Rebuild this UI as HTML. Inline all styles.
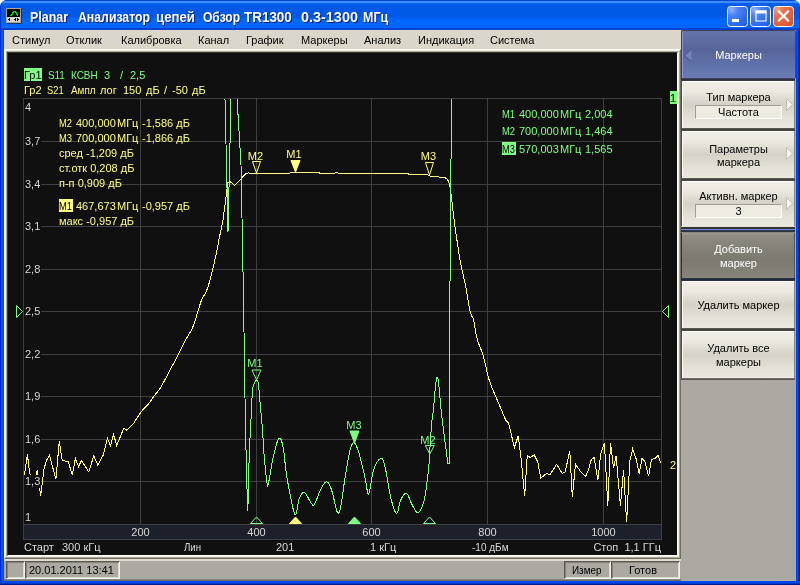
<!DOCTYPE html>
<html><head><meta charset="utf-8">
<style>
*{margin:0;padding:0;box-sizing:border-box}
html,body{width:800px;height:585px;overflow:hidden;background:#fff;font-family:"Liberation Sans",sans-serif}
.a{position:absolute}
#win{will-change:transform;position:absolute;left:0;top:0;width:800px;height:585px;background:#0050e8;border-radius:7px 7px 0 0;overflow:hidden}
#title{left:0;top:0;width:800px;height:30px;background:linear-gradient(to bottom,#0a46c8 0px,#0a46c8 1px,#3d8dff 1px,#3d8dff 3px,#0d62f0 3px,#0058e6 6px,#0058e6 16px,#005eef 18px,#0066ff 20px,#0066ff 28px,#0043cf 28px,#0043cf 30px)}
.ttlw{top:9px;font:bold 14px "Liberation Sans",sans-serif;line-height:16px;color:#fff;text-shadow:1px 1px 0 #0a1e7a;white-space:pre;transform-origin:0 0}
.tb{top:6px;width:21px;height:21px;border:1px solid #fff;border-radius:3px}
#lb{left:0;top:30px;width:4px;height:555px;background:linear-gradient(to right,#0028d8 1px,#0058f0 1px,#0058f0 3px,#0048e8 3px)}
#lb2{left:0;top:6px;width:1px;height:24px;background:#0036d0}#rb2{left:799px;top:6px;width:1px;height:24px;background:#0028a8}
#rb{left:796px;top:30px;width:4px;height:555px;background:linear-gradient(to right,#0044f0 1px,#0050f8 1px,#0050f8 2px,#0030b8 2px,#0030b8 3px,#001c90 3px)}
#bb{left:0;top:581px;width:800px;height:4px;background:linear-gradient(to bottom,#0048f0 1px,#0050f8 1px,#0030b8 3px,#001c90 3px)}
#client{left:4px;top:30px;width:792px;height:551px;background:#aca9a2}
#menu{left:4px;top:30px;width:677px;height:19px;background:#dad6ca}
.mi{top:34px;font-size:11px;color:#000;white-space:pre}
#frame{left:4px;top:49px;width:677px;height:508px;background:#101010;
 border-left:1px solid #fff;border-top:1px solid #fff;}
#status{left:4px;top:557px;width:677px;height:24px;background:#aca9a2}
#rpanel{left:681px;top:30px;width:115px;height:551px;background:#aca9a2}
.txt{font-size:11px;white-space:pre;position:absolute;line-height:13px}
.btn{position:absolute;left:681px;width:115px;border-radius:3px;
 background:linear-gradient(to bottom,#f6f5f0 0%,#e6e3da 20%,#d3cfc4 50%,#e4e1d8 80%,#efede5 100%);
 border:1px solid #5d5a52}
.bt{position:absolute;left:0;width:113px;text-align:center;font-size:11px;color:#000;line-height:13px}
.fld{position:absolute;left:13px;width:87px;height:14px;background:#eeebe0;border-top:1px solid #a09d94;border-left:1px solid #a09d94;border-bottom:1px solid #fff;border-right:1px solid #fff;text-align:center;font-size:11px;line-height:12px}
</style></head><body>
<div id="win">
<div id="title" class="a"></div>
<svg class="a" style="left:6px;top:8px" width="17" height="17" shape-rendering="crispEdges">
<rect x="1" y="1" width="15" height="15" fill="#1a1a1a" opacity="0.6"/>
<rect x="0" y="0" width="15" height="15" fill="#b0a68c"/>
<rect x="1" y="1" width="13" height="8" fill="#000"/>
<rect x="1" y="9" width="13" height="5" fill="#d4d4d4"/>
<path d="M4,7 L5,7 L5,6 L6,6 L6,4 L7,4 L7,3 L9,3 L9,4 L10,4 L10,6 L11,6 L11,7 L12,7" fill="none" stroke="#00e000" stroke-width="1" transform="translate(0,0)"/>
<path d="M2,11.5 L4,10 L4,13 Z M8,11.5 L10,10 L10,13 Z M10.5,10 L12,10 L13,11.5 L12,13 L10.5,13 Z" fill="#000"/>
</svg>
<div class="a ttlw" style="left:30px;transform:scaleX(0.89)">Planar</div><div class="a ttlw" style="left:78px;transform:scaleX(0.876)">Анализатор</div><div class="a ttlw" style="left:156px;transform:scaleX(0.945)">цепей</div><div class="a ttlw" style="left:203px;transform:scaleX(0.86)">Обзор</div><div class="a ttlw" style="left:244px;transform:scaleX(0.96)">TR1300</div><div class="a ttlw" style="left:301px;transform:scaleX(1.03)">0.3-1300</div><div class="a ttlw" style="left:363px;transform:scaleX(0.89)">МГц</div>
<svg class="a" style="left:727px;top:6px" width="67" height="21">
<defs>
<radialGradient id="gb" cx="0.2" cy="0.15" r="1.1"><stop offset="0" stop-color="#8fb2f8"/><stop offset="0.3" stop-color="#4a80f2"/><stop offset="0.8" stop-color="#2a66ec"/><stop offset="1" stop-color="#1c56e2"/></radialGradient>
<radialGradient id="gr" cx="0.2" cy="0.15" r="1.1"><stop offset="0" stop-color="#eea488"/><stop offset="0.3" stop-color="#e6704a"/><stop offset="0.8" stop-color="#dc5c34"/><stop offset="1" stop-color="#cc4c22"/></radialGradient>
</defs>
<rect x="0.5" y="0.5" width="20" height="20" rx="3" fill="url(#gb)" stroke="#fff"/>
<rect x="23.5" y="0.5" width="20" height="20" rx="3" fill="url(#gb)" stroke="#fff"/>
<rect x="46.5" y="0.5" width="20" height="20" rx="3" fill="url(#gr)" stroke="#fff"/>
<rect x="5" y="13" width="7" height="3" fill="#fff"/>
<path d="M29,5 h10 v10 h-10 Z" fill="none" stroke="#fff" stroke-width="1.2"/>
<rect x="28.5" y="4.5" width="11" height="3" fill="#fff"/>
<path d="M52,5.5 L61,14.5 M61,5.5 L52,14.5" stroke="#fff" stroke-width="2.2" stroke-linecap="square"/>
</svg>
<div id="lb" class="a"></div><div id="lb2" class="a"></div><div id="rb2" class="a"></div><div id="rb" class="a"></div><div id="bb" class="a"></div>
<div id="client" class="a"></div>
<div id="menu" class="a"></div>
<div class="a mi" style="left:12px">Стимул</div>
<div class="a mi" style="left:66px">Отклик</div>
<div class="a mi" style="left:121px">Калибровка</div>
<div class="a mi" style="left:198px">Канал</div>
<div class="a mi" style="left:246px">График</div>
<div class="a mi" style="left:301px">Маркеры</div>
<div class="a mi" style="left:364px">Анализ</div>
<div class="a mi" style="left:418px">Индикация</div>
<div class="a mi" style="left:490px">Система</div>

<div class="a" style="left:4px;top:49px;width:677px;height:510px;border-top:1px solid #fff;border-left:1px solid #fff;border-right:1px solid #716f64;border-bottom:1px solid #716f64">
 <div style="width:100%;height:100%;border-top:1px solid #f1efe2;border-left:1px solid #f1efe2;border-right:1px solid #aca899;border-bottom:1px solid #aca899">
  <div style="width:100%;height:100%;border-top:1px solid #aca899;border-left:1px solid #aca899;border-right:1px solid #f1efe2;border-bottom:1px solid #f1efe2">
   <div style="width:100%;height:100%;border-top:1px solid #3a3832;border-left:1px solid #3a3832;border-right:1px solid #fff;border-bottom:1px solid #fff;background:#101010"></div>
  </div>
 </div>
</div>
<div class="a" style="left:4px;top:559px;width:677px;height:22px;background:#aca9a2;border-top:2px solid #dedbd0;border-bottom:1px solid #6e6c64;box-shadow:inset 0 -1px 0 #8a877c"></div>
<div class="a" style="left:6px;top:561px;width:19px;height:18px;border-top:1px solid #5a5850;border-left:1px solid #5a5850;border-right:1px solid #f4f2ea;border-bottom:1px solid #f4f2ea;box-shadow:inset 1px 1px 0 #85827a,inset -1px -1px 0 #dedbd2"></div>
<div class="a" style="left:25px;top:561px;width:95px;height:18px;border-top:1px solid #5a5850;border-left:1px solid #5a5850;border-right:1px solid #f4f2ea;border-bottom:1px solid #f4f2ea;box-shadow:inset 1px 1px 0 #85827a,inset -1px -1px 0 #dedbd2"></div>
<div class="a txt" style="left:29px;top:564px;color:#000">20.01.2011 13:41</div>
<div class="a" style="left:564px;top:561px;width:47px;height:18px;border-top:1px solid #5a5850;border-left:1px solid #5a5850;border-right:1px solid #f4f2ea;border-bottom:1px solid #f4f2ea;box-shadow:inset 1px 1px 0 #85827a,inset -1px -1px 0 #dedbd2"></div>
<div class="a" style="left:611px;top:561px;width:69px;height:18px;border-top:1px solid #5a5850;border-left:1px solid #5a5850;border-right:1px solid #f4f2ea;border-bottom:1px solid #f4f2ea;box-shadow:inset 1px 1px 0 #85827a,inset -1px -1px 0 #dedbd2"></div>
<div class="a txt" style="left:572px;top:564px;color:#000;transform:scaleX(0.9);transform-origin:0 0">Измер</div>
<div class="a txt" style="left:629px;top:564px;color:#000">Готов</div>

<div id="rpanel" class="a"></div>
<!--CHART-->
<svg class="a" style="left:0;top:0" width="800" height="585" viewBox="0 0 800 585">
<defs><clipPath id="pc"><rect x="24" y="99" width="637" height="425"/></clipPath></defs>
<rect x="24" y="525" width="637" height="14" fill="#1c2029"/>
<g stroke="#404040" stroke-width="1" shape-rendering="crispEdges">
<line x1="23.5" y1="98" x2="23.5" y2="540"/>
<line x1="140.5" y1="98" x2="140.5" y2="524"/>
<line x1="256.5" y1="98" x2="256.5" y2="524"/>
<line x1="371.5" y1="98" x2="371.5" y2="524"/>
<line x1="487.5" y1="98" x2="487.5" y2="524"/>
<line x1="603.5" y1="98" x2="603.5" y2="524"/>
<line x1="661.5" y1="98" x2="661.5" y2="540"/>
<line x1="23" y1="98.5" x2="662" y2="98.5"/>
<line x1="23" y1="141.5" x2="662" y2="141.5"/>
<line x1="23" y1="184.5" x2="662" y2="184.5"/>
<line x1="23" y1="226.5" x2="662" y2="226.5"/>
<line x1="23" y1="269.5" x2="662" y2="269.5"/>
<line x1="23" y1="311.5" x2="662" y2="311.5"/>
<line x1="23" y1="354.5" x2="662" y2="354.5"/>
<line x1="23" y1="396.5" x2="662" y2="396.5"/>
<line x1="23" y1="439.5" x2="662" y2="439.5"/>
<line x1="23" y1="481.5" x2="662" y2="481.5"/>
<line x1="23" y1="524.5" x2="662" y2="524.5"/>
<line x1="23" y1="539.5" x2="662" y2="539.5"/>
</g>
<g clip-path="url(#pc)" fill="none" stroke-width="1" stroke-linejoin="miter" shape-rendering="crispEdges">
<polyline points="24.2,476.3 27.4,454.1 29.6,473.3 33.5,484.0 37.3,470.0 40.6,496.0 43.9,469.7 46.3,460.7 49.5,455.3 55.9,479.3 59.3,441.0 62.2,460.5 68.2,461.5 72.3,474.9 75.4,458.5 78.5,466.7 81.5,460.5 88.7,471.8 93.8,455.9 97.8,465.1 103.3,454.9 107.4,438.5 110.5,445.6 113.6,434.4 116.7,445.6 123.8,428.2 126.9,430.3 133.1,424.1 134.6,421.8 136.7,418.5 139.1,414.9 141.3,411.8 143.4,409.2 145.6,406.9 147.7,404.7 149.5,402.6 151.0,400.7 152.2,398.9 153.3,397.2 154.6,395.4 156.0,393.6 157.4,392.0 159.0,389.9 160.8,387.2 163.0,383.4 165.5,378.7 168.0,373.9 170.3,369.5 172.3,365.8 174.2,362.3 176.0,358.9 177.9,355.4 179.8,351.6 181.7,347.7 183.7,343.8 185.6,340.0 187.5,336.6 189.4,333.5 191.4,330.1 193.3,325.9 195.3,320.3 197.2,313.6 199.2,307.0 201.0,301.5 202.7,297.6 204.4,294.8 205.9,292.1 207.4,288.7 208.8,284.3 210.2,279.3 211.4,274.3 212.6,269.5 213.7,265.1 214.7,260.7 215.6,256.6 216.4,252.8 217.1,249.5 217.6,246.6 218.2,243.6 218.9,240.0 219.9,235.1 221.1,229.2 222.2,223.8 223.0,220.1 226.4,194.2 227.8,182.5 230.5,181.9 234.6,185.3 241.4,178.4 245.5,173.9 248.3,173.0 262.0,173.5 263.0,173.0 290.0,173.0 291.0,172.3 318.4,172.3 319.8,173.3 334.9,173.3 336.3,172.3 338.3,173.3 407.6,173.3 409.0,174.4 427.5,174.7 430.3,176.0 437.2,176.9 444.7,177.4 447.5,179.2 449.5,184.0 451.2,195.0 454.8,225.9 455.9,233.2 457.5,243.7 459.2,254.9 460.8,264.2 462.1,270.6 463.3,275.7 464.4,280.4 465.6,285.7 466.8,292.4 468.0,299.7 469.2,306.6 470.3,312.0 471.2,315.0 472.0,316.4 472.8,317.6 473.6,320.0 474.4,324.0 475.2,329.0 476.1,334.2 477.2,339.1 478.5,343.3 480.1,347.2 481.7,351.3 483.2,355.9 484.7,361.5 486.1,367.8 487.5,374.1 489.1,379.8 490.8,384.6 492.5,388.9 494.3,393.1 496.3,397.8 498.8,403.7 501.6,410.3 504.1,416.3 505.9,420.5 508.5,423.0 514.4,447.3 518.2,436.0 521.0,457.6 524.7,496.1 527.2,455.7 530.4,457.6 534.1,454.8 537.9,462.3 540.7,478.3 546.4,473.6 550.1,474.5 556.7,464.2 562.3,473.6 565.2,471.7 569.8,451.0 572.3,497.1 575.5,464.2 580.0,470.8 585.6,476.4 588.5,469.8 591.3,459.5 594.1,457.6 597.9,480.2 600.7,453.8 604.4,442.6 607.8,505.5 610.5,442.6 613.5,467.9 616.1,455.7 620.4,505.5 623.6,469.8 626.6,522.4 629.8,461.4 632.6,449.1 636.4,459.5 639.2,473.6 642.0,458.5 644.8,461.4 648.6,476.4 651.4,459.5 655.1,458.3 658.2,455.3 660.8,463.2" stroke="#ffff80"/>
<polyline points="222.3,-20.0 228.0,232.0 233.7,-20.0 235.4,70.0 241.0,165.0 243.4,292.0 245.5,430.0 247.6,511.2 248.3,498.4 249.3,448.8 249.5,445.8 249.8,441.6 250.1,436.3 250.5,430.0 250.9,421.7 251.3,411.6 251.8,401.9 252.2,394.4 252.6,390.0 252.9,387.5 253.3,386.0 253.8,384.5 254.4,382.9 255.1,381.6 255.8,380.8 256.5,380.5 257.1,380.7 257.7,381.5 258.2,382.6 258.6,384.2 258.8,385.7 258.9,387.3 259.0,389.9 259.3,394.4 260.0,401.8 260.9,411.4 261.8,421.4 262.5,430.0 262.9,436.3 263.2,441.5 263.4,446.5 263.8,452.2 264.5,459.6 265.3,468.0 266.1,475.8 266.8,481.3 267.3,484.3 267.6,485.5 267.9,485.0 268.5,483.0 269.4,478.7 270.4,472.4 271.6,465.4 272.8,459.0 274.2,452.9 275.8,446.7 277.3,441.5 278.7,438.5 279.9,438.0 281.0,439.4 282.0,442.5 283.0,447.0 284.0,453.4 284.9,461.6 286.0,470.7 287.3,479.6 289.1,489.4 291.2,500.1 293.2,509.4 295.0,514.6 296.3,513.9 297.3,509.1 298.2,502.9 299.2,498.4 300.4,495.8 301.7,493.8 303.0,492.6 304.4,492.4 305.9,493.8 307.5,496.5 309.0,499.5 310.4,501.8 311.4,503.4 312.3,504.8 313.1,505.5 314.2,504.8 315.6,502.2 317.2,498.1 318.8,493.7 320.4,490.0 322.0,487.1 323.5,484.5 325.0,482.5 326.5,481.8 327.8,482.3 329.0,483.9 330.2,486.5 331.6,490.0 333.3,496.2 335.1,504.6 337.0,511.5 338.8,513.6 340.4,508.6 342.0,498.9 343.6,487.5 345.0,477.7 346.4,469.7 347.7,462.1 348.9,455.3 350.1,450.0 351.2,446.3 352.2,444.0 353.1,442.8 354.2,442.8 355.4,444.0 356.6,446.4 357.9,449.8 359.3,454.1 360.8,459.8 362.5,466.7 364.1,473.8 365.5,479.7 366.4,485.0 367.1,490.0 367.8,493.5 368.6,494.1 369.7,490.4 370.9,483.4 372.2,475.6 373.7,469.5 375.4,465.3 377.3,461.7 379.3,459.3 380.9,458.2 382.2,458.6 383.2,460.3 384.1,463.2 385.2,467.4 386.4,473.5 387.7,481.3 389.0,489.3 390.4,496.2 391.9,502.1 393.5,507.5 395.1,511.7 396.5,513.6 397.6,512.3 398.6,508.5 399.5,503.9 400.6,500.3 401.9,497.6 403.4,495.2 404.9,493.5 406.4,493.1 407.8,494.7 409.1,497.8 410.5,501.4 411.9,504.4 413.4,507.1 415.0,510.0 416.5,512.1 418.1,512.6 419.7,511.4 421.3,508.8 422.8,505.0 424.2,500.3 425.4,494.0 426.5,486.3 427.5,478.4 428.3,471.5 428.8,466.1 429.2,461.6 429.4,457.1 429.7,452.0 430.1,445.8 430.5,439.0 431.0,432.3 431.4,426.4 431.8,422.0 432.3,418.4 432.8,414.8 433.3,410.0 434.0,402.9 434.7,394.5 435.5,386.4 436.2,380.8 436.8,378.0 437.3,377.1 437.7,377.7 438.2,379.4 438.7,383.1 439.2,388.6 439.7,394.2 440.0,398.0 441.6,415.0 447.8,463.3 449.3,463.3 449.3,282.0 450.3,281.0 450.3,160.0 451.3,159.0 451.6,-20.0" stroke="#80ff80"/>
</g>
<path d="M252.5,161.5 L260.5,161.5 L256.5,173 Z" fill="none" stroke="#ffff80" stroke-width="1"/>
<path d="M291.0,160.5 L300.0,160.5 L295.5,172 Z" fill="#ffff80" stroke="#ffff80" stroke-width="1"/>
<path d="M425.5,162.5 L433.5,162.5 L429.5,175 Z" fill="none" stroke="#ffff80" stroke-width="1"/>
<path d="M252.0,370.0 L261.0,370.0 L256.5,380 Z" fill="none" stroke="#80ff80" stroke-width="1"/>
<path d="M350.0,431.0 L359.0,431.0 L354.5,443 Z" fill="#80ff80" stroke="#80ff80" stroke-width="1"/>
<path d="M425.3,445.5 L434.3,445.5 L429.8,454 Z" fill="none" stroke="#80ff80" stroke-width="1"/>
<path d="M250.5,523.5 L262.5,523.5 L256.5,517 Z" fill="none" stroke="#80ff80" stroke-width="1"/>
<path d="M289.5,523.5 L301.5,523.5 L295.5,517 Z" fill="#ffff80" stroke="#ffff80" stroke-width="1"/>
<path d="M348.5,523.5 L360.5,523.5 L354.5,517 Z" fill="#80ff80" stroke="#80ff80" stroke-width="1"/>
<path d="M423.5,523.5 L435.5,523.5 L429.5,517 Z" fill="none" stroke="#80ff80" stroke-width="1"/>
<path d="M16.5,305.5 L22.5,311.5 L16.5,317.5 Z" fill="none" stroke="#80ff80"/>
<path d="M668.5,305.5 L662.5,311.5 L668.5,317.5 Z" fill="none" stroke="#80ff80"/>
</svg>
<div class="txt" style="left:24px;top:101px;color:#d8d8d8;background:#101010;padding:0 1px 0 1px;min-width:17px;text-shadow:0 0 1px #000">4</div>
<div class="txt" style="left:24px;top:135px;color:#d8d8d8;background:#101010;padding:0 1px 0 1px;min-width:17px;text-shadow:0 0 1px #000">3,7</div>
<div class="txt" style="left:24px;top:178px;color:#d8d8d8;background:#101010;padding:0 1px 0 1px;min-width:17px;text-shadow:0 0 1px #000">3,4</div>
<div class="txt" style="left:24px;top:220px;color:#d8d8d8;background:#101010;padding:0 1px 0 1px;min-width:17px;text-shadow:0 0 1px #000">3,1</div>
<div class="txt" style="left:24px;top:263px;color:#d8d8d8;background:#101010;padding:0 1px 0 1px;min-width:17px;text-shadow:0 0 1px #000">2,8</div>
<div class="txt" style="left:24px;top:305px;color:#d8d8d8;background:#101010;padding:0 1px 0 1px;min-width:17px;text-shadow:0 0 1px #000">2,5</div>
<div class="txt" style="left:24px;top:348px;color:#d8d8d8;background:#101010;padding:0 1px 0 1px;min-width:17px;text-shadow:0 0 1px #000">2,2</div>
<div class="txt" style="left:24px;top:390px;color:#d8d8d8;background:#101010;padding:0 1px 0 1px;min-width:17px;text-shadow:0 0 1px #000">1,9</div>
<div class="txt" style="left:24px;top:433px;color:#d8d8d8;background:#101010;padding:0 1px 0 1px;min-width:17px;text-shadow:0 0 1px #000">1,6</div>
<div class="txt" style="left:24px;top:475px;color:#d8d8d8;background:#101010;padding:0 1px 0 1px;min-width:17px;text-shadow:0 0 1px #000">1,3</div>
<div class="txt" style="left:24px;top:511px;color:#d8d8d8;background:#101010;padding:0 1px 0 1px;min-width:17px;text-shadow:0 0 1px #000">1</div>
<div class="txt" style="left:110px;width:61px;text-align:center;top:526px;color:#d8d8d8">200</div>
<div class="txt" style="left:226px;width:61px;text-align:center;top:526px;color:#d8d8d8">400</div>
<div class="txt" style="left:341px;width:61px;text-align:center;top:526px;color:#d8d8d8">600</div>
<div class="txt" style="left:457px;width:61px;text-align:center;top:526px;color:#d8d8d8">800</div>
<div class="txt" style="left:573px;width:61px;text-align:center;top:526px;color:#d8d8d8">1000</div>
<div class="txt" style="left:24px;top:541px;color:#d8d8d8;">Старт</div>
<div class="txt" style="left:62px;top:541px;color:#d8d8d8;">300 кГц</div>
<div class="txt" style="left:184px;top:541px;color:#d8d8d8;transform:scaleX(0.88);transform-origin:0 0;">Лин</div>
<div class="txt" style="left:276px;top:541px;color:#d8d8d8;">201</div>
<div class="txt" style="left:370px;top:541px;color:#d8d8d8;">1 кГц</div>
<div class="txt" style="left:472px;top:541px;color:#d8d8d8;transform:scaleX(0.91);transform-origin:0 0;">-10 дБм</div>
<div class="txt" style="left:560px;width:101px;text-align:right;top:541px;color:#d8d8d8">Стоп  1,1 ГГц</div>
<div class="a" style="left:24px;top:68px;width:18px;height:13px;background:#80ff80"></div>
<div class="txt" style="left:24px;top:69px;color:#000;">Гр1</div>
<div class="txt" style="left:48px;top:69px;color:#80ff80;transform:scaleX(0.9);transform-origin:0 0;">S11</div>
<div class="txt" style="left:71px;top:69px;color:#80ff80;transform:scaleX(0.9);transform-origin:0 0;">КСВН</div>
<div class="txt" style="left:104px;top:69px;color:#80ff80;">3</div>
<div class="txt" style="left:120px;top:69px;color:#80ff80;">/</div>
<div class="txt" style="left:130px;top:69px;color:#80ff80;">2,5</div>
<div class="txt" style="left:24px;top:84px;color:#ffff80;">Гр2</div>
<div class="txt" style="left:47px;top:84px;color:#ffff80;transform:scaleX(0.85);transform-origin:0 0;">S21</div>
<div class="txt" style="left:71px;top:84px;color:#ffff80;transform:scaleX(0.9);transform-origin:0 0;">Ампл</div>
<div class="txt" style="left:100px;top:84px;color:#ffff80;">лог</div>
<div class="txt" style="left:123px;top:84px;color:#ffff80;">150</div>
<div class="txt" style="left:146px;top:84px;color:#ffff80;">дБ</div>
<div class="txt" style="left:164px;top:84px;color:#ffff80;">/</div>
<div class="txt" style="left:172px;top:84px;color:#ffff80;">-50</div>
<div class="txt" style="left:192px;top:84px;color:#ffff80;">дБ</div>
<div class="txt" style="left:59px;top:117px;color:#ffff80;transform:scaleX(0.85);transform-origin:0 0;">M2</div>
<div class="txt" style="left:76px;top:117px;color:#ffff80;">400,000</div>
<div class="txt" style="left:117px;top:117px;color:#ffff80;">МГц</div>
<div class="txt" style="left:142px;top:117px;color:#ffff80;">-1,586 дБ</div>
<div class="txt" style="left:59px;top:132px;color:#ffff80;transform:scaleX(0.85);transform-origin:0 0;">M3</div>
<div class="txt" style="left:76px;top:132px;color:#ffff80;">700,000</div>
<div class="txt" style="left:117px;top:132px;color:#ffff80;">МГц</div>
<div class="txt" style="left:142px;top:132px;color:#ffff80;">-1,866 дБ</div>
<div class="txt" style="left:59px;top:147px;color:#ffff80;">сред -1,209 дБ</div>
<div class="txt" style="left:59px;top:162px;color:#ffff80;">ст.отк 0,208 дБ</div>
<div class="txt" style="left:59px;top:177px;color:#ffff80;">п-п 0,909 дБ</div>
<div class="a" style="left:59px;top:199px;width:14px;height:13px;background:#ffff80"></div>
<div class="txt" style="left:59px;top:200px;color:#ffff80;transform:scaleX(0.85);transform-origin:0 0;"><span style="color:#000">M1</span></div>
<div class="txt" style="left:76px;top:200px;color:#ffff80;">467,673</div>
<div class="txt" style="left:117px;top:200px;color:#ffff80;">МГц</div>
<div class="txt" style="left:142px;top:200px;color:#ffff80;">-0,957 дБ</div>
<div class="txt" style="left:59px;top:215px;color:#ffff80;">макс -0,957 дБ</div>
<div class="txt" style="left:502px;top:108px;color:#80ff80;transform:scaleX(0.85);transform-origin:0 0;">M1</div>
<div class="txt" style="left:519px;top:108px;color:#80ff80;">400,000</div>
<div class="txt" style="left:560px;top:108px;color:#80ff80;">МГц</div>
<div class="txt" style="left:585px;top:108px;color:#80ff80;">2,004</div>
<div class="txt" style="left:502px;top:125px;color:#80ff80;transform:scaleX(0.85);transform-origin:0 0;">M2</div>
<div class="txt" style="left:519px;top:125px;color:#80ff80;">700,000</div>
<div class="txt" style="left:560px;top:125px;color:#80ff80;">МГц</div>
<div class="txt" style="left:585px;top:125px;color:#80ff80;">1,464</div>
<div class="a" style="left:502px;top:142px;width:14px;height:13px;background:#80ff80"></div>
<div class="txt" style="left:502px;top:143px;color:#80ff80;transform:scaleX(0.85);transform-origin:0 0;"><span style="color:#000">M3</span></div>
<div class="txt" style="left:519px;top:143px;color:#80ff80;">570,003</div>
<div class="txt" style="left:560px;top:143px;color:#80ff80;">МГц</div>
<div class="txt" style="left:585px;top:143px;color:#80ff80;">1,565</div>
<div class="txt" style="left:240.5px;width:30px;text-align:center;top:150px;color:#ffff80">M2</div>
<div class="txt" style="left:279px;width:30px;text-align:center;top:148px;color:#ffff80">M1</div>
<div class="txt" style="left:413.5px;width:30px;text-align:center;top:150px;color:#ffff80">M3</div>
<div class="txt" style="left:240px;width:30px;text-align:center;top:357px;color:#80ff80">M1</div>
<div class="txt" style="left:339px;width:30px;text-align:center;top:419px;color:#80ff80">M3</div>
<div class="txt" style="left:413px;width:30px;text-align:center;top:434px;color:#80ff80">M2</div>
<div class="a" style="left:670px;top:91px;width:7px;height:13px;background:#80ff80"></div>
<div class="txt" style="left:670px;top:92px;color:#000;">1</div>
<div class="txt" style="left:670px;top:459px;color:#ffff80;">2</div>
<!--/CHART-->

<div class="a" style="left:681px;top:30px;width:115px;height:48px;border-radius:2px 2px 0 0;background:linear-gradient(to bottom,#6474aa 0%,#5e6da2 20%,#56649a 40%,#5e6ea6 65%,#6a7cb6 100%);border-top:1px solid #3a4058;border-left:1px solid #3a4058;border-right:1px solid #3c466c;box-shadow:inset 1px 0 0 #8a9ad0"></div>
<div class="a" style="left:681px;top:78px;width:114px;height:1px;background:#3a4258"></div>
<div class="a" style="left:681px;top:79px;width:114px;height:1px;background:#2c3244"></div>
<div class="a" style="left:681px;top:80px;width:114px;height:1px;background:#3a3c44"></div>
<div class="a" style="left:681px;top:81px;width:114px;height:47px;background:linear-gradient(to bottom,#ffffff 0px,#ffffff 1px,#f1efe7 1px,#e9e6dd 25%,#d5d1c5 50%,#e2dfd5 75%,#ebe8df 100%);border-left:1px solid #4a4840;border-right:1px solid #8c887a;box-shadow:inset 1px 0 0 #fff"></div>
<div class="a" style="left:681px;top:128px;width:114px;height:1px;background:#5a5850"></div>
<div class="a" style="left:681px;top:129px;width:114px;height:1px;background:#46443e"></div>
<div class="a" style="left:681px;top:130px;width:114px;height:1px;background:#4a4842"></div>
<div class="a" style="left:681px;top:131px;width:114px;height:47px;background:linear-gradient(to bottom,#ffffff 0px,#ffffff 1px,#f1efe7 1px,#e9e6dd 25%,#d5d1c5 50%,#e2dfd5 75%,#ebe8df 100%);border-left:1px solid #4a4840;border-right:1px solid #8c887a;box-shadow:inset 1px 0 0 #fff"></div>
<div class="a" style="left:681px;top:178px;width:114px;height:1px;background:#5a5850"></div>
<div class="a" style="left:681px;top:179px;width:114px;height:1px;background:#46443e"></div>
<div class="a" style="left:681px;top:180px;width:114px;height:1px;background:#4a4842"></div>
<div class="a" style="left:681px;top:181px;width:114px;height:45px;background:linear-gradient(to bottom,#ffffff 0px,#ffffff 1px,#f1efe7 1px,#e9e6dd 25%,#d5d1c5 50%,#e2dfd5 75%,#ebe8df 100%);border-left:1px solid #4a4840;border-right:1px solid #8c887a;box-shadow:inset 1px 0 0 #fff"></div>
<div class="a" style="left:681px;top:226px;width:114px;height:1px;background:#e0ddd2"></div>
<div class="a" style="left:681px;top:227px;width:114px;height:1px;background:#3a3832"></div>
<div class="a" style="left:681px;top:228px;width:114px;height:1px;background:#2e2e30"></div>
<div class="a" style="left:681px;top:229px;width:114px;height:1px;background:#6f8ee6"></div>
<div class="a" style="left:681px;top:230px;width:114px;height:1px;background:#2e3444"></div>
<div class="a" style="left:681px;top:231px;width:114px;height:1px;background:#2e3444"></div>
<div class="a" style="left:681px;top:232px;width:114px;height:1px;background:#8a877c"></div>
<div class="a" style="left:681px;top:233px;width:114px;height:45px;background:linear-gradient(to bottom,#a09d95 0px,#8f8c84 2px,#85827a 30%,#7c7971 60%,#87847c 100%);border-left:1px solid #2c3244;border-right:1px solid #5a5850"></div>
<div class="a" style="left:681px;top:278px;width:114px;height:1px;background:#2e3444"></div>
<div class="a" style="left:681px;top:279px;width:114px;height:1px;background:#22283a"></div>
<div class="a" style="left:681px;top:280px;width:114px;height:1px;background:#2e3444"></div>
<div class="a" style="left:681px;top:281px;width:114px;height:47px;background:linear-gradient(to bottom,#ffffff 0px,#ffffff 1px,#f1efe7 1px,#e9e6dd 25%,#d5d1c5 50%,#e2dfd5 75%,#ebe8df 100%);border-left:1px solid #4a4840;border-right:1px solid #8c887a;box-shadow:inset 1px 0 0 #fff"></div>
<div class="a" style="left:681px;top:328px;width:114px;height:1px;background:#5a5850"></div>
<div class="a" style="left:681px;top:329px;width:114px;height:1px;background:#46443e"></div>
<div class="a" style="left:681px;top:330px;width:114px;height:1px;background:#4a4842"></div>
<div class="a" style="left:681px;top:331px;width:114px;height:47px;background:linear-gradient(to bottom,#ffffff 0px,#ffffff 1px,#f1efe7 1px,#e9e6dd 25%,#d5d1c5 50%,#e2dfd5 75%,#ebe8df 100%);border-left:1px solid #4a4840;border-right:1px solid #8c887a;box-shadow:inset 1px 0 0 #fff"></div>
<div class="a" style="left:681px;top:378px;width:114px;height:1px;background:#6e6c64"></div>
<div class="a" style="left:681px;top:379px;width:114px;height:1px;background:#55534c"></div>
<svg class="a" style="left:683px;top:49px" width="10" height="14"><path d="M8.5 0.5 L1.5 6.5 L8.5 12.5 Z" fill="#7384bc"/><path d="M8.5 0.5 L1.5 6.5 L8.5 12.5" fill="none" stroke="#46548a" stroke-width="1"/></svg>
<svg class="a" style="left:785px;top:98px" width="9" height="15"><path d="M1.5 0.5 L7.5 6.5 L1.5 12.5 Z" fill="#f6f4ee" stroke="#c4c0b4" stroke-width="1"/></svg>
<svg class="a" style="left:785px;top:147px" width="9" height="15"><path d="M1.5 0.5 L7.5 6.5 L1.5 12.5 Z" fill="#f6f4ee" stroke="#c4c0b4" stroke-width="1"/></svg>
<svg class="a" style="left:785px;top:197px" width="9" height="15"><path d="M1.5 0.5 L7.5 6.5 L1.5 12.5 Z" fill="#f6f4ee" stroke="#c4c0b4" stroke-width="1"/></svg>
<div class="a bt" style="left:682px;top:49px;color:#fff">Маркеры</div>
<div class="a bt" style="left:682px;top:91px">Тип маркера</div>
<div class="a fld" style="left:695px;top:105px">Частота</div>
<div class="a bt" style="left:682px;top:143px">Параметры</div>
<div class="a bt" style="left:682px;top:156px">маркера</div>
<div class="a bt" style="left:682px;top:190px">Активн. маркер</div>
<div class="a fld" style="left:695px;top:204px">3</div>
<div class="a bt" style="left:682px;top:243px;color:#fff">Добавить</div>
<div class="a bt" style="left:682px;top:257px;color:#fff">маркер</div>
<div class="a bt" style="left:682px;top:299px">Удалить маркер</div>
<div class="a bt" style="left:682px;top:342px">Удалить все</div>
<div class="a bt" style="left:682px;top:356px">маркеры</div>

</div>
</body></html>
